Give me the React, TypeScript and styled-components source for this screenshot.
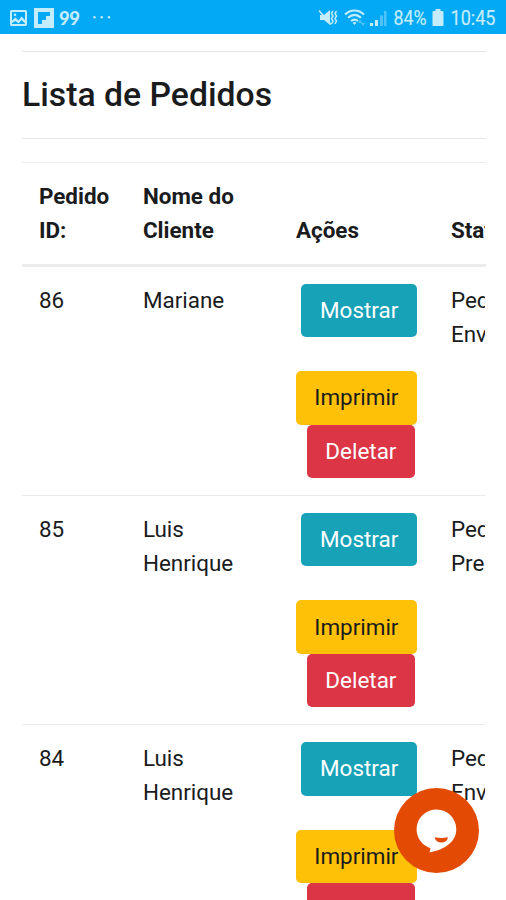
import React from "react";
import styled, { createGlobalStyle } from "styled-components";

const GlobalStyle = createGlobalStyle`
  *, *::before, *::after { box-sizing: border-box; }
  html, body { margin: 0; padding: 0; background: #fff; }
  body {
    height: 900px;
    overflow: hidden;
    font-family: Roboto, "Liberation Sans", sans-serif;
    color: #1a1b1d;
  }
`;

const Screen = styled.div`
  width: 506px;
  height: 900px;
  overflow: hidden;
  display: flex;
  flex-direction: column;
  background: #fff;
`;

const StatusBar = styled.header`
  flex: none;
  height: 34px;
  padding: 2px 10px 0;
  display: flex;
  align-items: center;
  justify-content: space-between;
  background: #03a9f4;
  color: #c4ecfd;
`;

const StatusGroup = styled.div`
  display: flex;
  align-items: center;
`;

const AppMark = styled.span`
  width: 23px;
  margin-left: 5px;
  font-family: Lato, sans-serif;
  font-weight: 900;
  font-size: 18.5px;
  line-height: 30px;
  letter-spacing: -0.5px;
`;

const StatusIcon = styled.svg<{ $gap?: number }>`
  display: block;
  flex: none;
  overflow: visible;
  margin-left: ${(p) => p.$gap ?? 0}px;
  fill: currentColor;
`;

const Content = styled.main`
  flex: 1;
  min-height: 0;
  overflow: hidden;
  margin: 0 20px 0 22px;
  padding-top: 17px;
`;

const Divider = styled.hr`
  height: 1px;
  margin: 0;
  border: 0;
  background: #e6e6e6;
`;

const Title = styled.h4`
  height: 86px;
  margin: 0;
  padding-top: 22px;
  font-size: 33.75px;
  font-weight: 500;
  line-height: 41px;
`;

const TableWrap = styled.div`
  margin-top: 23px;
  overflow: hidden;
`;

const Table = styled.div`
  width: 640px;
  font-size: 22.45px;
  line-height: 33.7px;
`;

const Row = styled.div<{ $head?: boolean }>`
  display: grid;
  grid-template-columns: 104px 153px 155px 228px;
  align-items: ${(p) => (p.$head ? "end" : "start")};
  height: ${(p) => (p.$head ? "105px" : "229.2px")};
  border-top: ${(p) => (p.$head ? "1px solid #eeeeee" : "0")};
  border-bottom: ${(p) => (p.$head ? "3px solid #ebebec" : "1px solid #e9eaeb")};
  font-weight: ${(p) => (p.$head ? 700 : 400)};
`;

const Cell = styled.div`
  padding: 16.9px;
`;

const StatusCell = styled(Cell)`
  width: 51px;
  padding-right: 0;
  overflow: hidden;
`;

const Line = styled.div`
  white-space: nowrap;
`;

const Actions = styled.div`
  width: 121px;
  display: flex;
  flex-direction: column;
  align-items: flex-end;
`;

const tones = {
  info: { bg: "#17a2b8", fg: "#fff", width: 115.5, margin: "0 0 33.9px" },
  warning: { bg: "#ffc107", fg: "#1a1b1d", width: 121, margin: "0" },
  danger: { bg: "#dc3545", fg: "#fff", width: 108, margin: "0 2px 0 0" },
};

const Button = styled.button<{ $tone: keyof typeof tones }>`
  width: ${(p) => tones[p.$tone].width}px;
  height: 53.4px;
  margin: ${(p) => tones[p.$tone].margin};
  padding: 0;
  border: 0;
  border-radius: 5px;
  background: ${(p) => tones[p.$tone].bg};
  color: ${(p) => tones[p.$tone].fg};
  font: inherit;
  line-height: 53px;
  text-align: center;
`;

const ChatButton = styled.button`
  position: fixed;
  left: 394px;
  top: 787.5px;
  width: 85px;
  height: 85px;
  padding: 0;
  border: 0;
  border-radius: 50%;
  background: #e34b04;
`;

const orders = [
  { id: "86", name: ["Mariane"], status: ["Pedido", "Enviado"] },
  { id: "85", name: ["Luis", "Henrique"], status: ["Pedido", "Preparando"] },
  { id: "84", name: ["Luis", "Henrique"], status: ["Pedido", "Enviado"] },
];

const headings = [["Pedido", "ID:"], ["Nome do", "Cliente"], ["Ações"]];

const Lines = ({ items }: { items: string[] }) => (
  <>
    {items.map((t) => (
      <Line key={t}>{t}</Line>
    ))}
  </>
);

export default function App() {
  return (
    <Screen>
      <GlobalStyle />
      <StatusBar>
        <StatusGroup>
          <StatusIcon width="17" height="16" viewBox="0 0 17 16">
            <path fillRule="evenodd" d="M1.5 0h14A1.5 1.5 0 0 1 17 1.500v13a1.500 1.500 0 0 1-1.500 1.500h-14A1.500 1.500 0 0 1 0 14.500v-13A1.500 1.500 0 0 1 1.500 0zM2 2v8.500l3.500-3 3 3 3-4L15 10V2zM2 13V14h13v-.5l-3.500-3.500-3 3.500-3-2.500z" />
            <circle cx="5" cy="4.800" r="1.300" />
          </StatusIcon>
          <StatusIcon $gap={7} width="20" height="20" viewBox="0 0 20 20">
            <path fillRule="evenodd" d="M0 0h20v20H0zM4 4v12h4v-4h4V8h4V4z" />
          </StatusIcon>
          <AppMark>99</AppMark>
          <StatusIcon $gap={11} width="18" height="4" viewBox="0 0 18 4">
            <circle cx="1.500" cy="1.300" r="1.200" />
            <circle cx="8.700" cy="1.300" r="1.200" />
            <circle cx="16" cy="1.300" r="1.200" />
          </StatusIcon>
        </StatusGroup>
        <StatusGroup>
          <StatusIcon width="19" height="18" viewBox="0 0 19 18">
            <path d="M0 6h4l6-5v15l-6-5H0z" />
            <path d="M-1 1.500 11 15.500" stroke="currentColor" strokeWidth="1.500" />
            <path d="M13 2l-1.500 2.500L13 7l-1.500 2.500L13 12l-1.500 3M16.500 2 15 4.500 16.500 7 15 9.500l1.500 2.500-1.500 3" fill="none" stroke="currentColor" strokeWidth="1.500" />
          </StatusIcon>
          <StatusIcon $gap={6} width="21" height="18" viewBox="0 0 21 18">
            <path d="M0 5.500C5.500 0 13.500 0 19 5.500M3 8.800C7.200 5 11.800 5 16 8.800M6 12C8.500 10 10.500 10 13 12" fill="none" stroke="currentColor" strokeWidth="2" />
            <path d="m9.500 16-2-2.300q2-1.500 4 0z" />
            <path opacity=".45" d="m15 11 2 3h-4zM18 17l-2-3h4z" />
          </StatusIcon>
          <StatusIcon $gap={4} width="18" height="17" viewBox="0 0 18 17">
            <path d="M0 13h3v3H0zM5 10h3v6H5z" />
            <path opacity=".4" d="M10 5.500h3V16h-3zM14 1h2.500v15H14z" />
          </StatusIcon>
          <StatusIcon $gap={6} width="33" height="30" viewBox="0 0 33 30">
            <text x="-0.500" y="22" fontSize="20" textLength="33" lengthAdjust="spacingAndGlyphs" stroke="currentColor" strokeWidth=".2">84%</text>
          </StatusIcon>
          <StatusIcon $gap={5} width="12" height="18" viewBox="0 0 12 18">
            <path d="M3.500 0h5v2h2q1 0 1 1v13q0 1-1 1h-9q-1 0-1-1V3q0-1 1-1h2z" />
          </StatusIcon>
          <StatusIcon $gap={7} width="45" height="30" viewBox="0 0 45 30">
            <text x="-0.500" y="22" fontSize="20" textLength="45" lengthAdjust="spacingAndGlyphs" stroke="currentColor" strokeWidth=".2">10:45</text>
          </StatusIcon>
        </StatusGroup>
      </StatusBar>
      <Content>
        <Divider />
        <Title>Lista de Pedidos</Title>
        <Divider />
        <TableWrap>
          <Table>
            <Row $head>
              {headings.map((h) => (
                <Cell key={h[0]}>
                  <Lines items={h} />
                </Cell>
              ))}
              <StatusCell>Status</StatusCell>
            </Row>
            {orders.map((o) => (
              <Row key={o.id}>
                <Cell>{o.id}</Cell>
                <Cell>
                  <Lines items={o.name} />
                </Cell>
                <Cell>
                  <Actions>
                    <Button $tone="info">Mostrar</Button>
                    <Button $tone="warning">Imprimir</Button>
                    <Button $tone="danger">Deletar</Button>
                  </Actions>
                </Cell>
                <StatusCell>
                  <Lines items={o.status} />
                </StatusCell>
              </Row>
            ))}
          </Table>
        </TableWrap>
      </Content>
      <ChatButton aria-label="Chat">
        <svg width="85" height="85" viewBox="0 0 85 85">
          <path fill="#fff" d="M42.500 21.500A19.800 19.800 0 0 1 62.300 41.300C62.300 53 52 61.500 35.500 64.500L36.500 60.200A19.800 19.800 0 0 1 42.500 21.500z" />
          <path fill="#e34b04" d="M40.500 49.300Q47.500 50.500 54 49.300Q53 54.500 47.500 54.500T40.500 49.300z" />
        </svg>
      </ChatButton>
    </Screen>
  );
}
